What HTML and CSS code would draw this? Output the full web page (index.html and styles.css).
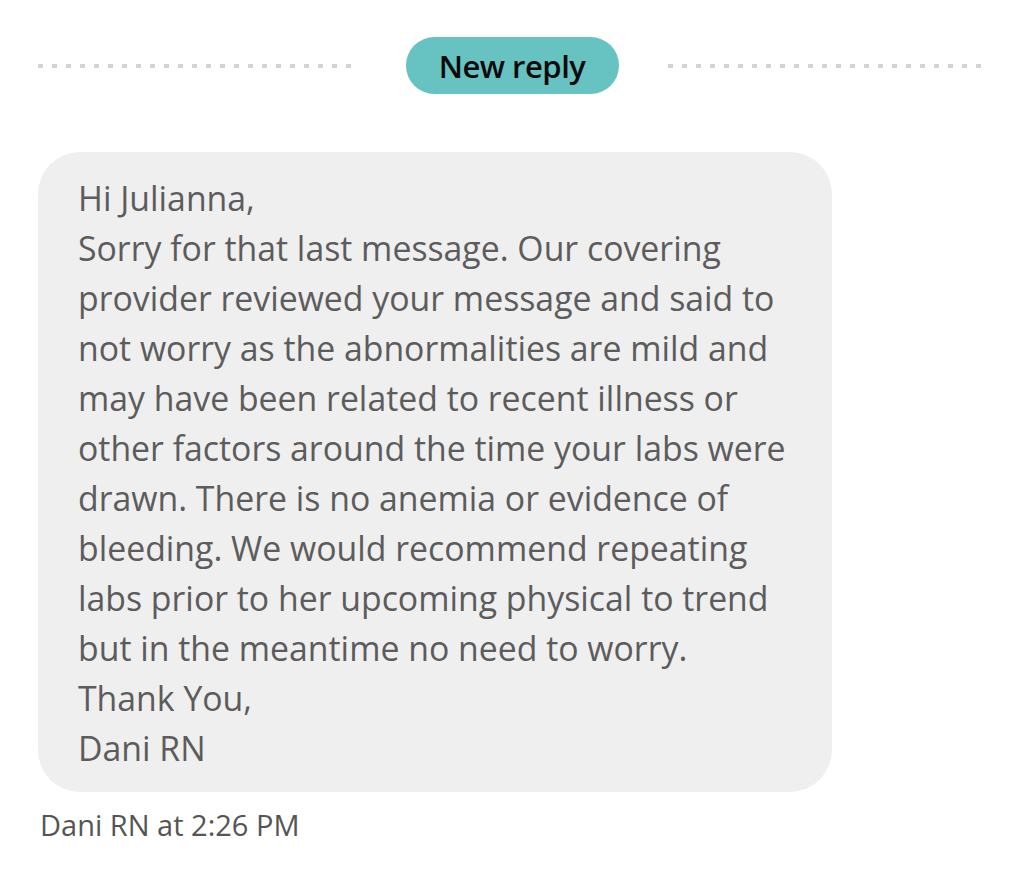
FILE: index.html
```html
<!DOCTYPE html>
<html>
<head>
<meta charset="utf-8">
<link rel="stylesheet" href="styles.css">
</head>
<body>
<div class="page">
  <div class="divider">
    <span class="dots"></span>
    <span class="pill">New reply</span>
    <span class="dots"></span>
  </div>
  <div class="bubble">
    <p>Hi Julianna,<br>Sorry for that last message. Our covering provider reviewed your message and said to not worry as the abnormalities are mild and may have been related to recent illness or other factors around the time your labs were drawn. There is no anemia or evidence of bleeding. We would recommend repeating labs prior to her upcoming physical to trend but in the meantime no need to worry.<br>Thank You,<br>Dani RN</p>
  </div>
  <div class="meta">Dani RN at 2:26 PM</div>
</div>
</body>
</html>
```
FILE: styles.css
```css
html, body {
  margin: 0;
  padding: 0;
  background: #ffffff;
}
.page {
  font-family: "Open Sans", "Noto Sans", sans-serif;
  padding: 37px 0 0 38px;
  width: 948px;
}
.divider {
  display: flex;
  align-items: center;
  justify-content: space-between;
  height: 57px;
}
.dots {
  width: 318px;
  height: 4px;
  background-image: linear-gradient(to right, #d4d4d4 0 5px, transparent 5px 14px);
  background-size: 14px 4px;
  background-repeat: repeat-x;
}
.pill {
  display: flex;
  align-items: center;
  justify-content: center;
  width: 213px;
  height: 57px;
  border-radius: 29px;
  background: #66c3c1;
  color: #0a0a0a;
  font-size: 31px;
  font-weight: 600;
  letter-spacing: -0.5px;
}
.bubble {
  margin-top: 58px;
  width: 794px;
  box-sizing: border-box;
  background: #efefef;
  border-radius: 42px;
  padding: 21px 30px 19px 40px;
}
.bubble p {
  margin: 0;
  color: #5c5c5c;
  font-size: 33.8px;
  line-height: 50px;
}
.meta {
  margin-top: 16px;
  margin-left: 2px;
  color: #555555;
  font-size: 29px;
  line-height: 34px;
}
```
